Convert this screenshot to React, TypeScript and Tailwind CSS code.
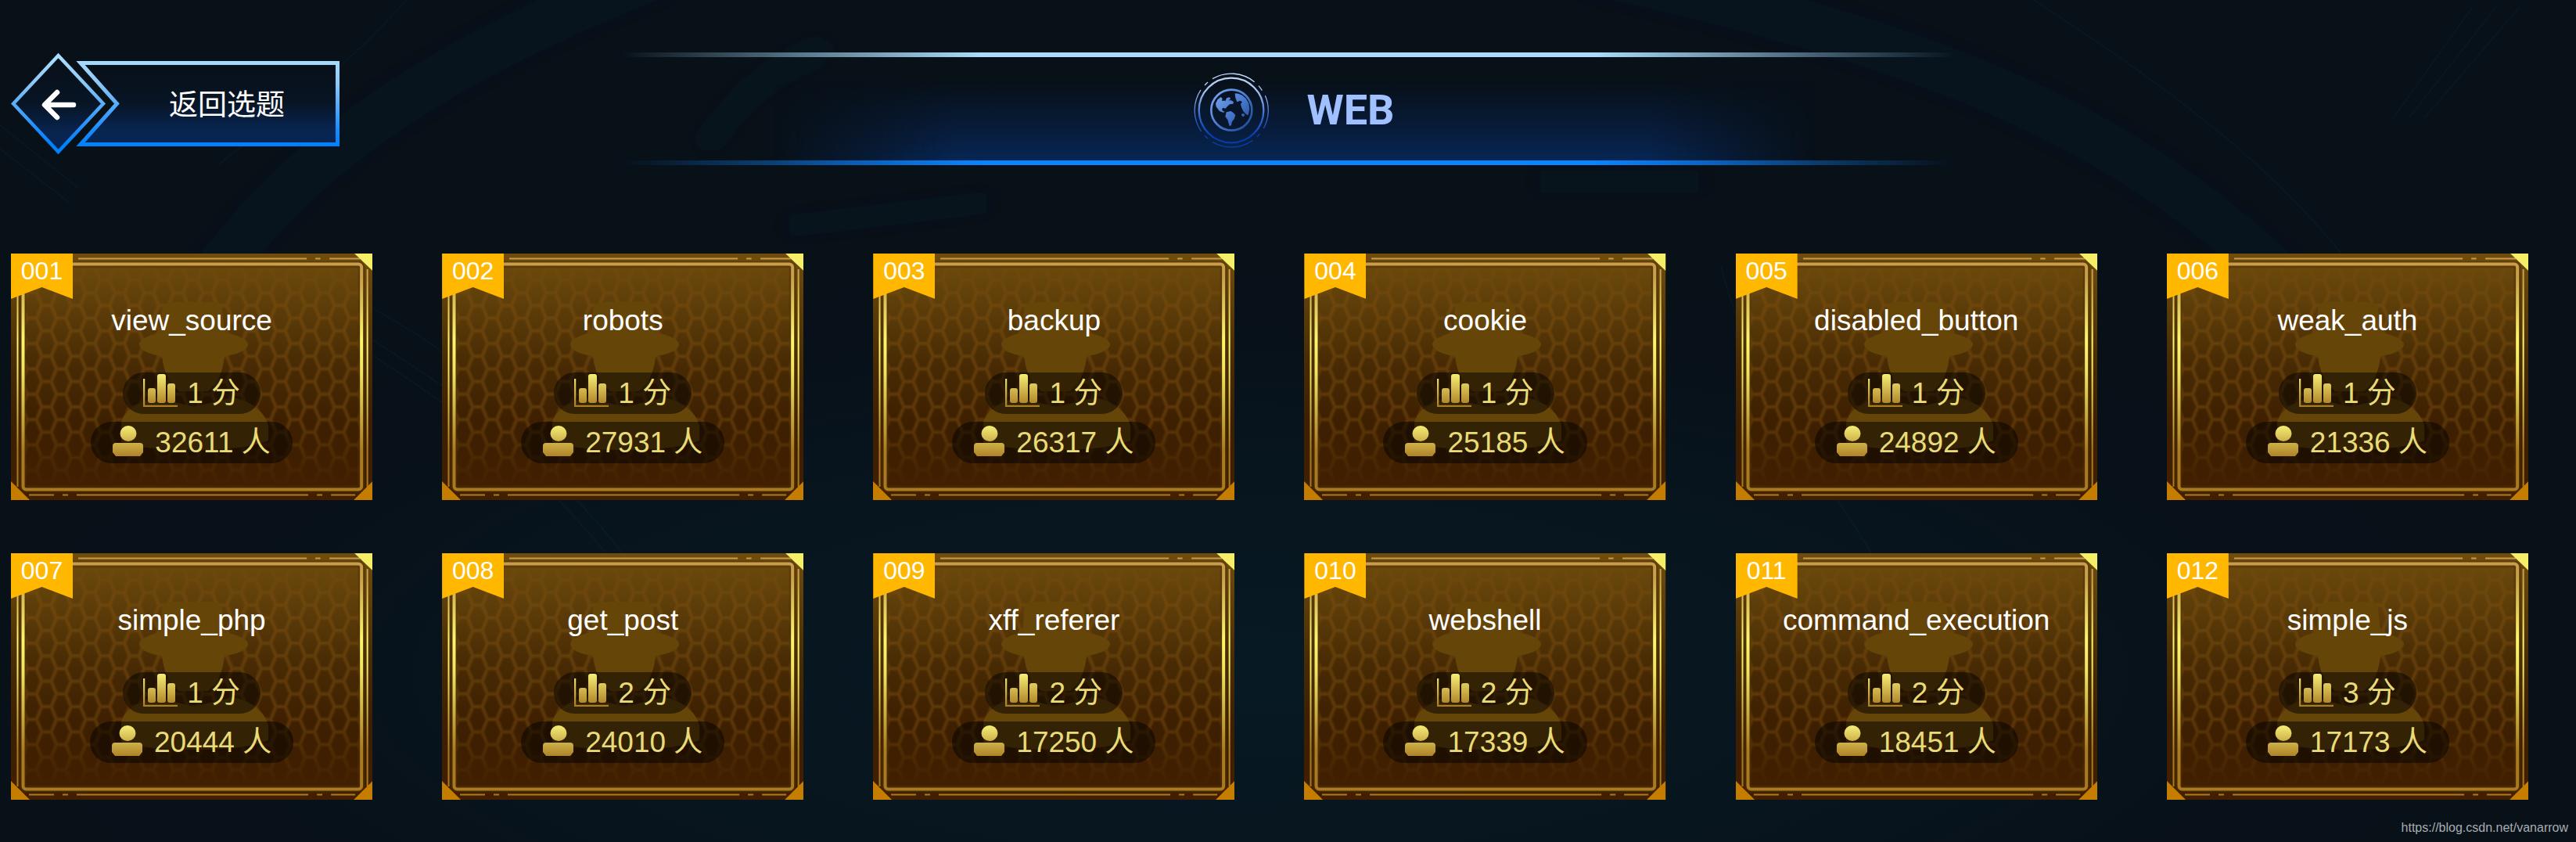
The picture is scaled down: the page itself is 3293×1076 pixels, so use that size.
type Challenge = { title: string; score: number; solved: number };

const challenges: Challenge[] = [
  { title: "view_source", score: 1, solved: 32611 },
  { title: "robots", score: 1, solved: 27931 },
  { title: "backup", score: 1, solved: 26317 },
  { title: "cookie", score: 1, solved: 25185 },
  { title: "disabled_button", score: 1, solved: 24892 },
  { title: "weak_auth", score: 1, solved: 21336 },
  { title: "simple_php", score: 1, solved: 20444 },
  { title: "get_post", score: 2, solved: 24010 },
  { title: "xff_referer", score: 2, solved: 17250 },
  { title: "webshell", score: 2, solved: 17339 },
  { title: "command_execution", score: 2, solved: 18451 },
  { title: "simple_js", score: 3, solved: 17173 },
];

// One tile of the honeycomb, drawn twice: a wide dim stroke under a thin one
const CELL = "M-6 0H6L12.700 16.200 6 32.400H-6M43.400 0H31.400L24.700 16.200 31.400 32.400H43.400M12.700 16.200H24.700";

// Gradients and patterns shared by every svg on the page
function Defs() {
  return (
    <svg className="absolute h-0 w-0" aria-hidden="true">
      <defs>
        <linearGradient id="card" x1="0" y1="0" x2="0" y2="1">
          <stop offset="0" stopColor="#704d0d" />
          <stop offset=".2" stopColor="#5e3e09" />
          <stop offset=".45" stopColor="#482b04" />
          <stop offset=".7" stopColor="#3d1f01" />
          <stop offset="1" stopColor="#421f00" />
        </linearGradient>
        <linearGradient id="frame" gradientUnits="userSpaceOnUse" x1="0" y1="0" x2="0" y2="315">
          <stop offset="0" stopColor="#c8994a" />
          <stop offset=".1" stopColor="#c9a24c" />
          <stop offset=".35" stopColor="#fbf76c" />
          <stop offset=".48" stopColor="#efe460" />
          <stop offset=".8" stopColor="#a97c22" />
          <stop offset="1" stopColor="#a97a20" />
        </linearGradient>
        <linearGradient id="cellFade" gradientUnits="userSpaceOnUse" x1="0" y1="0" x2="0" y2="315">
          <stop offset="0" stopColor="#fff" stopOpacity="0" />
          <stop offset=".2" stopColor="#fff" stopOpacity=".9" />
          <stop offset=".7" stopColor="#fff" stopOpacity=".8" />
          <stop offset=".95" stopColor="#fff" stopOpacity="0" />
        </linearGradient>
        <mask id="cellMask">
          <rect width="462" height="315" fill="url(#cellFade)" />
        </mask>
        <pattern id="cells" patternUnits="userSpaceOnUse" x="382" y="34" width="37.4" height="32.4">
          <g fill="none" stroke="#7d500f">
            <path strokeWidth="6" strokeOpacity=".3" d={CELL} />
            <path strokeWidth="2.5" strokeOpacity=".4" d={CELL} />
          </g>
        </pattern>
        <linearGradient id="gold" x1="0" y1="0" x2="0" y2="1">
          <stop offset="0" stopColor="#f6ee74" />
          <stop offset="1" stopColor="#cdb04c" />
        </linearGradient>
        <linearGradient id="goldAxis" gradientUnits="userSpaceOnUse" x1="0" y1="0" x2="0" y2="42">
          <stop offset="0" stopColor="#f6ee74" />
          <stop offset="1" stopColor="#a97a22" />
        </linearGradient>
        <linearGradient id="neon" gradientUnits="userSpaceOnUse" x1="0" y1="0" x2="0" y2="131">
          <stop offset=".05" stopColor="#aaddff" />
          <stop offset=".3" stopColor="#8cc8f8" />
          <stop offset=".75" stopColor="#1c8cfb" />
          <stop offset=".9" stopColor="#0082ff" />
        </linearGradient>
        <linearGradient id="neonFill" x1="0" y1="0" x2="0" y2="1">
          <stop offset=".1" stopColor="#08101a" />
          <stop offset=".5" stopColor="#081525" />
          <stop offset=".8" stopColor="#08244f" />
          <stop offset="1" stopColor="#082654" />
        </linearGradient>
        <linearGradient id="ring" gradientUnits="userSpaceOnUse" x1="0" y1="0" x2="0" y2="288">
          <stop offset="0" stopColor="#c4dcff" />
          <stop offset=".25" stopColor="#a5bff0" />
          <stop offset=".6" stopColor="#2f62c8" />
          <stop offset=".85" stopColor="#043cac" />
          <stop offset="1" stopColor="#0a3a9c" />
        </linearGradient>
        <linearGradient id="globe" gradientUnits="userSpaceOnUse" x1="66" y1="66" x2="224" y2="222">
          <stop offset="0" stopColor="#7fabf5" />
          <stop offset=".5" stopColor="#4a7bd0" />
          <stop offset="1" stopColor="#17428f" />
        </linearGradient>
      </defs>
    </svg>
  );
}

function Backdrop() {
  return (
    <svg
      className="absolute inset-0 h-full w-full"
      viewBox="0 0 3293 1076"
      preserveAspectRatio="none"
      aria-hidden="true"
    >
      <defs>
        <radialGradient id="glow" cx=".48" cy=".8" r=".5">
          <stop offset="0" stopColor="#071c26" stopOpacity=".8" />
          <stop offset=".6" stopColor="#071721" stopOpacity=".6" />
          <stop offset="1" stopColor="#07101a" stopOpacity="0" />
        </radialGradient>
        <filter id="soft">
          <feGaussianBlur stdDeviation="14" />
        </filter>
      </defs>
      <rect width="3293" height="1076" fill="#081018" />
      <rect width="3293" height="1076" fill="url(#glow)" />
      <g fill="none" stroke="#10303a" filter="url(#soft)">
        <path d="M230 420C340 230 520 90 860 -40" strokeWidth="60" strokeOpacity=".18" />
        <path d="M2020 -40C2480 60 2740 160 2980 420" strokeWidth="60" strokeOpacity=".18" />
        <path d="M900 190C940 130 980 90 1060 60" strokeWidth="24" strokeOpacity=".2" />
        <path d="M1000 290L1270 258M1960 232H2180" strokeWidth="14" strokeOpacity=".3" />
      </g>
      <g fill="none" stroke="#123440" strokeOpacity=".22" strokeWidth="2">
        <path d="M470 430C560 490 700 570 820 740M470 450C560 510 690 590 800 740M470 390C520 420 560 440 600 480" />
        <path d="M280 210C340 160 420 110 520 0M2600 0C2800 130 2960 250 3060 420M2200 340C2240 500 2330 600 2400 720" />
        <path d="M3060 150L3160 10M3080 150L3190 10M3100 150L3220 10M0 160L100 240M0 190L90 260" />
      </g>
    </svg>
  );
}

function BackButton() {
  return (
    <button type="button" className="relative ml-[14px] h-[131px] w-[420px] cursor-pointer">
      <svg className="absolute inset-0 h-full w-full" viewBox="0 0 420 131" aria-hidden="true">
        <path d="M89 13.500H417.500V117.500H89L135.500 65.500Z" fill="url(#neonFill)" stroke="url(#neon)" strokeWidth="5" />
        <path d="M60.500 4L118 65.500 60.500 127 3 65.500Z" fill="url(#neonFill)" stroke="url(#neon)" strokeWidth="4.500" />
        <path
          d="M80 67H44M59 51L43 67L59 83"
          fill="none"
          stroke="#fff"
          strokeWidth="6.500"
          strokeLinecap="round"
          strokeLinejoin="round"
        />
      </svg>
      <span className="relative block pt-1 pl-[202px] text-left text-[37px] leading-[48px] text-white">返回选题</span>
    </button>
  );
}

function GlobeEmblem() {
  return (
    <svg className="h-24 w-24" viewBox="0 0 288 288" aria-hidden="true">
      <g fill="none" stroke="url(#ring)">
        <circle cx="144" cy="144" r="124" strokeWidth="7" />
        <path
          strokeWidth="4"
          d="M72 23A141 141 0 0 1 233 35M249 50A141 141 0 0 1 262 68M274 88A141 141 0 0 1 268 213M253 234A141 141 0 0 1 243 246M226 259A141 141 0 0 1 72 265M55 253A141 141 0 0 1 42 241M29 225A141 141 0 0 1 27 66M42 48A141 141 0 0 1 54 36"
        />
      </g>
      <circle cx="145" cy="143" r="78" fill="#081423" fillOpacity=".5" stroke="url(#globe)" strokeWidth="8" />
      <g fill="url(#globe)">
        <path d="M84 118L92 102 104 93 110 99 108 107 122 107 126 97 138 94 141 101 132 106 144 106 153 112 151 119 138 121 128 130 122 137 112 134 108 140 112 146 120 150 112 152 98 146 86 130Z" />
        <path d="M125 151L142 147 152 153 160 163 155 177 146 189 144 202 137 204 130 180 121 168Z" />
        <path d="M158 79L172 80 186 86 200 98 211 116 214 140 209 162 203 161 190 148 183 132 180 120 186 112 178 107 166 112 160 96Z" />
        <path d="M183 158L192 156 196 163 190 169 184 165Z" />
      </g>
    </svg>
  );
}

function TitleBand() {
  return (
    <div className="relative h-36">
      <div className="absolute inset-0 bg-linear-to-b from-transparent from-25% via-[#081b38] via-65% to-[#062757] [mask-image:linear-gradient(to_right,transparent_13%,black_26%,black_76%,transparent_88%)]" />
      <div className="absolute inset-x-0 top-0 h-1.5 bg-linear-to-r from-transparent from-2% via-[#aaddfc] via-28% to-[#aaddfc] to-50% [mask-image:linear-gradient(to_right,black_72%,transparent_98%)]" />
      <div className="absolute inset-x-0 bottom-0 h-1.5 bg-linear-to-r from-transparent from-2% via-[#0a84ff] via-28% to-[#0a84ff] to-50% [mask-image:linear-gradient(to_right,black_72%,transparent_98%)]" />
      <div className="relative flex h-full items-center justify-center gap-12 pt-1 pl-4">
        <GlobeEmblem />
        <h1 className="font-[Roboto,sans-serif] text-[54px] leading-none font-bold text-[#a0c0ff]">WEB</h1>
      </div>
    </div>
  );
}

function CardArt() {
  return (
    <svg
      className="absolute inset-0 h-full w-full"
      viewBox="0 0 462 315"
      preserveAspectRatio="none"
      aria-hidden="true"
    >
      <rect width="462" height="315" fill="url(#card)" />
      <rect x="18" y="16" width="428" height="284" fill="url(#cells)" mask="url(#cellMask)" />
      {/* agent silhouette */}
      <g fill="#664509">
        <path d="M193 72Q194 62 204 62H260Q269 62 270 72L273 101C290 104 303 110 303 116C303 123 290 129 273 131C271 152 264 166 252 176H215C203 166 195 152 193 131C176 129 164 123 164 116C164 110 176 104 191 101Z" />
        <path d="M141 215C146 200 162 189 185 184L234 196 284 184C308 189 325 203 329 220V239Q300 251 234 251Q170 251 141 241Z" />
      </g>
      <g fill="none" stroke="#4f3005" strokeWidth="9" strokeOpacity=".5">
        <rect x="15" y="14" width="433" height="287" rx="4" />
      </g>
      <g fill="none" stroke="url(#frame)">
        <rect x="15.500" y="13.500" width="432.500" height="288" rx="4" strokeWidth="4" />
        <path
          strokeWidth="2"
          d="M8.500 20V298M455.500 20V298M86 6.500L378 6.600M389 6.500L395.500 6.600M407 6.500L446 6.600M23 308.500L55 308.600M66 308.500L73 308.600M84 308.500L380 308.600M391 308.500L398 308.600M409 308.500L440 308.600"
        />
      </g>
      <path d="M439 0H462V22Z" fill="#f5ef68" />
      <path d="M0 291L24 315H0ZM462 291V315H438Z" fill="#c57d00" />
    </svg>
  );
}

function ScoreIcon() {
  return (
    <svg className="mb-2 h-[42px] w-11" viewBox="0 0 44 42" aria-hidden="true">
      <path d="M1 6V41H44" fill="none" stroke="url(#goldAxis)" strokeWidth="2.500" />
      <g fill="url(#goldAxis)">
        <rect x="6" y="18" width="10" height="19" rx="3" />
        <rect x="18" y="0" width="11" height="37" rx="3" />
        <rect x="31" y="12" width="10" height="25" rx="3" />
      </g>
    </svg>
  );
}

function SolverIcon() {
  return (
    <svg className="mb-1 h-[39px] w-10" viewBox="0 0 40 39" aria-hidden="true">
      <ellipse cx="20" cy="10" rx="10.500" ry="10" fill="url(#gold)" />
      <path d="M4 22H35Q39 22 39 26V34L35 39H4L0 34V26Q0 22 4 22Z" fill="url(#goldAxis)" />
    </svg>
  );
}

function ChallengeCard({ challenge, index }: { challenge: Challenge; index: number }) {
  return (
    <a href={`#${challenge.title}`} className="relative flex flex-col items-center pt-[62px] pb-[47px]">
      <CardArt />
      <span className="absolute top-0 left-0 h-[58px] w-[79px] bg-[#ffb700] text-center text-[32px] leading-[44px] text-white [clip-path:polygon(0_0,100%_0,100%_100%,50%_74%,0_100%)]">
        {String(index + 1).padStart(3, "0")}
      </span>
      <h2 className="relative text-[37px] leading-[48px] text-white">{challenge.title}</h2>
      <div className="relative mt-[42px] flex flex-col items-center gap-[10px] text-[37px] text-[#e9dc78]">
        <p className="flex h-[53px] items-center gap-3 rounded-full bg-black/50 px-[26px] leading-[50px]">
          <ScoreIcon />
          {challenge.score} 分
        </p>
        <p className="flex h-[53px] items-center gap-[14px] rounded-full bg-black/50 px-7 leading-[50px]">
          <SolverIcon />
          {challenge.solved} 人
        </p>
      </div>
    </a>
  );
}

export default function App() {
  return (
    <main className="relative min-h-screen overflow-hidden bg-[#081018] font-['Liberation_Sans','Noto_Sans_CJK_SC',sans-serif]">
      <Defs />
      <Backdrop />
      <header className="relative grid grid-cols-[1fr_54%_1fr] items-start pt-[67px]">
        <BackButton />
        <TitleBand />
      </header>
      <section className="relative mt-[113px] grid grid-cols-6 gap-x-[89px] gap-y-[68px] pr-[61px] pl-[14px]">
        {challenges.map((c, i) => (
          <ChallengeCard key={c.title} challenge={c} index={i} />
        ))}
      </section>
      <footer className="relative mt-6 pr-[10px] text-right text-base leading-6 text-[#a9adb1]">
        https://blog.csdn.net/vanarrow
      </footer>
    </main>
  );
}
